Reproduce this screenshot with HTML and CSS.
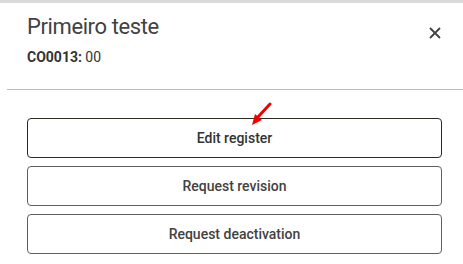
FILE: index.html
```html
<!DOCTYPE html>
<html lang="en">
<head>
<meta charset="UTF-8">
<title>Primeiro teste</title>
<link rel="stylesheet" href="styles.css">
</head>
<body>
<div class="modal">
  <div class="modal-header">
    <div>
      <h1 class="modal-title">Primeiro teste</h1>
      <p class="modal-code"><strong>CO0013:</strong> 00</p>
    </div>
    <button type="button" class="close-btn" aria-label="Close">
      <svg width="12" height="12" viewBox="0 0 12 12"><path d="M1 1L11 11M11 1L1 11" stroke="#424242" stroke-width="1.8" fill="none"/></svg>
    </button>
  </div>

  <hr class="divider">

  <div class="actions">
    <button type="button" class="action-btn active">Edit register</button>
    <button type="button" class="action-btn">Request revision</button>
    <button type="button" class="action-btn">Request deactivation</button>
    <svg class="pointer" width="22" height="24" viewBox="0 0 22 24">
      <path d="M20 2L8 15" stroke="#f20000" stroke-width="3" stroke-linecap="round"/>
      <path d="M2 23L5 12L12 18Z" fill="#f20000"/>
    </svg>
  </div>
</div>
</body>
</html>
```
FILE: styles.css
```css
body {
  margin: 0;
  font-family: Roboto, "Liberation Sans", sans-serif;
  background-color: #fff;
  border-top: 3px solid #dadada;
  color: #424242;
}

.modal-header {
  display: flex;
  justify-content: space-between;
  padding: 9.5px 22px 0 27px;
}

.modal-title {
  margin: 0;
  font-size: 22px;
  font-weight: 400;
  line-height: 28px;
  letter-spacing: -0.4px;
  color: #424242;
}

.modal-code {
  margin: 8.7px 0 0;
  font-size: 14px;
  line-height: 16px;
  color: #333;
}

.modal-code strong {
  font-weight: 700;
}

.close-btn {
  background: none;
  border: none;
  padding: 0;
  margin-top: 14px;
  width: 12px;
  height: 12px;
  cursor: pointer;
  display: block;
}

.close-btn svg {
  display: block;
}

.divider {
  margin: 23.8px 0 0 7px;
  border: none;
  border-top: 1px solid #bdbdbd;
}

.actions {
  position: relative;
  display: flex;
  flex-direction: column;
  gap: 8px;
  padding: 28px 21px 0 27px;
}

.action-btn {
  height: 40px;
  background-color: #fff;
  border: 1px solid #5f5f5f;
  border-radius: 4px;
  font-family: Roboto, "Liberation Sans", sans-serif;
  font-size: 14px;
  font-weight: 500;
  color: #424242;
  cursor: pointer;
}

.action-btn.active {
  border-color: #2b2b22;
  color: #333;
}

.pointer {
  position: absolute;
  left: 250px;
  top: 12px;
}
```
